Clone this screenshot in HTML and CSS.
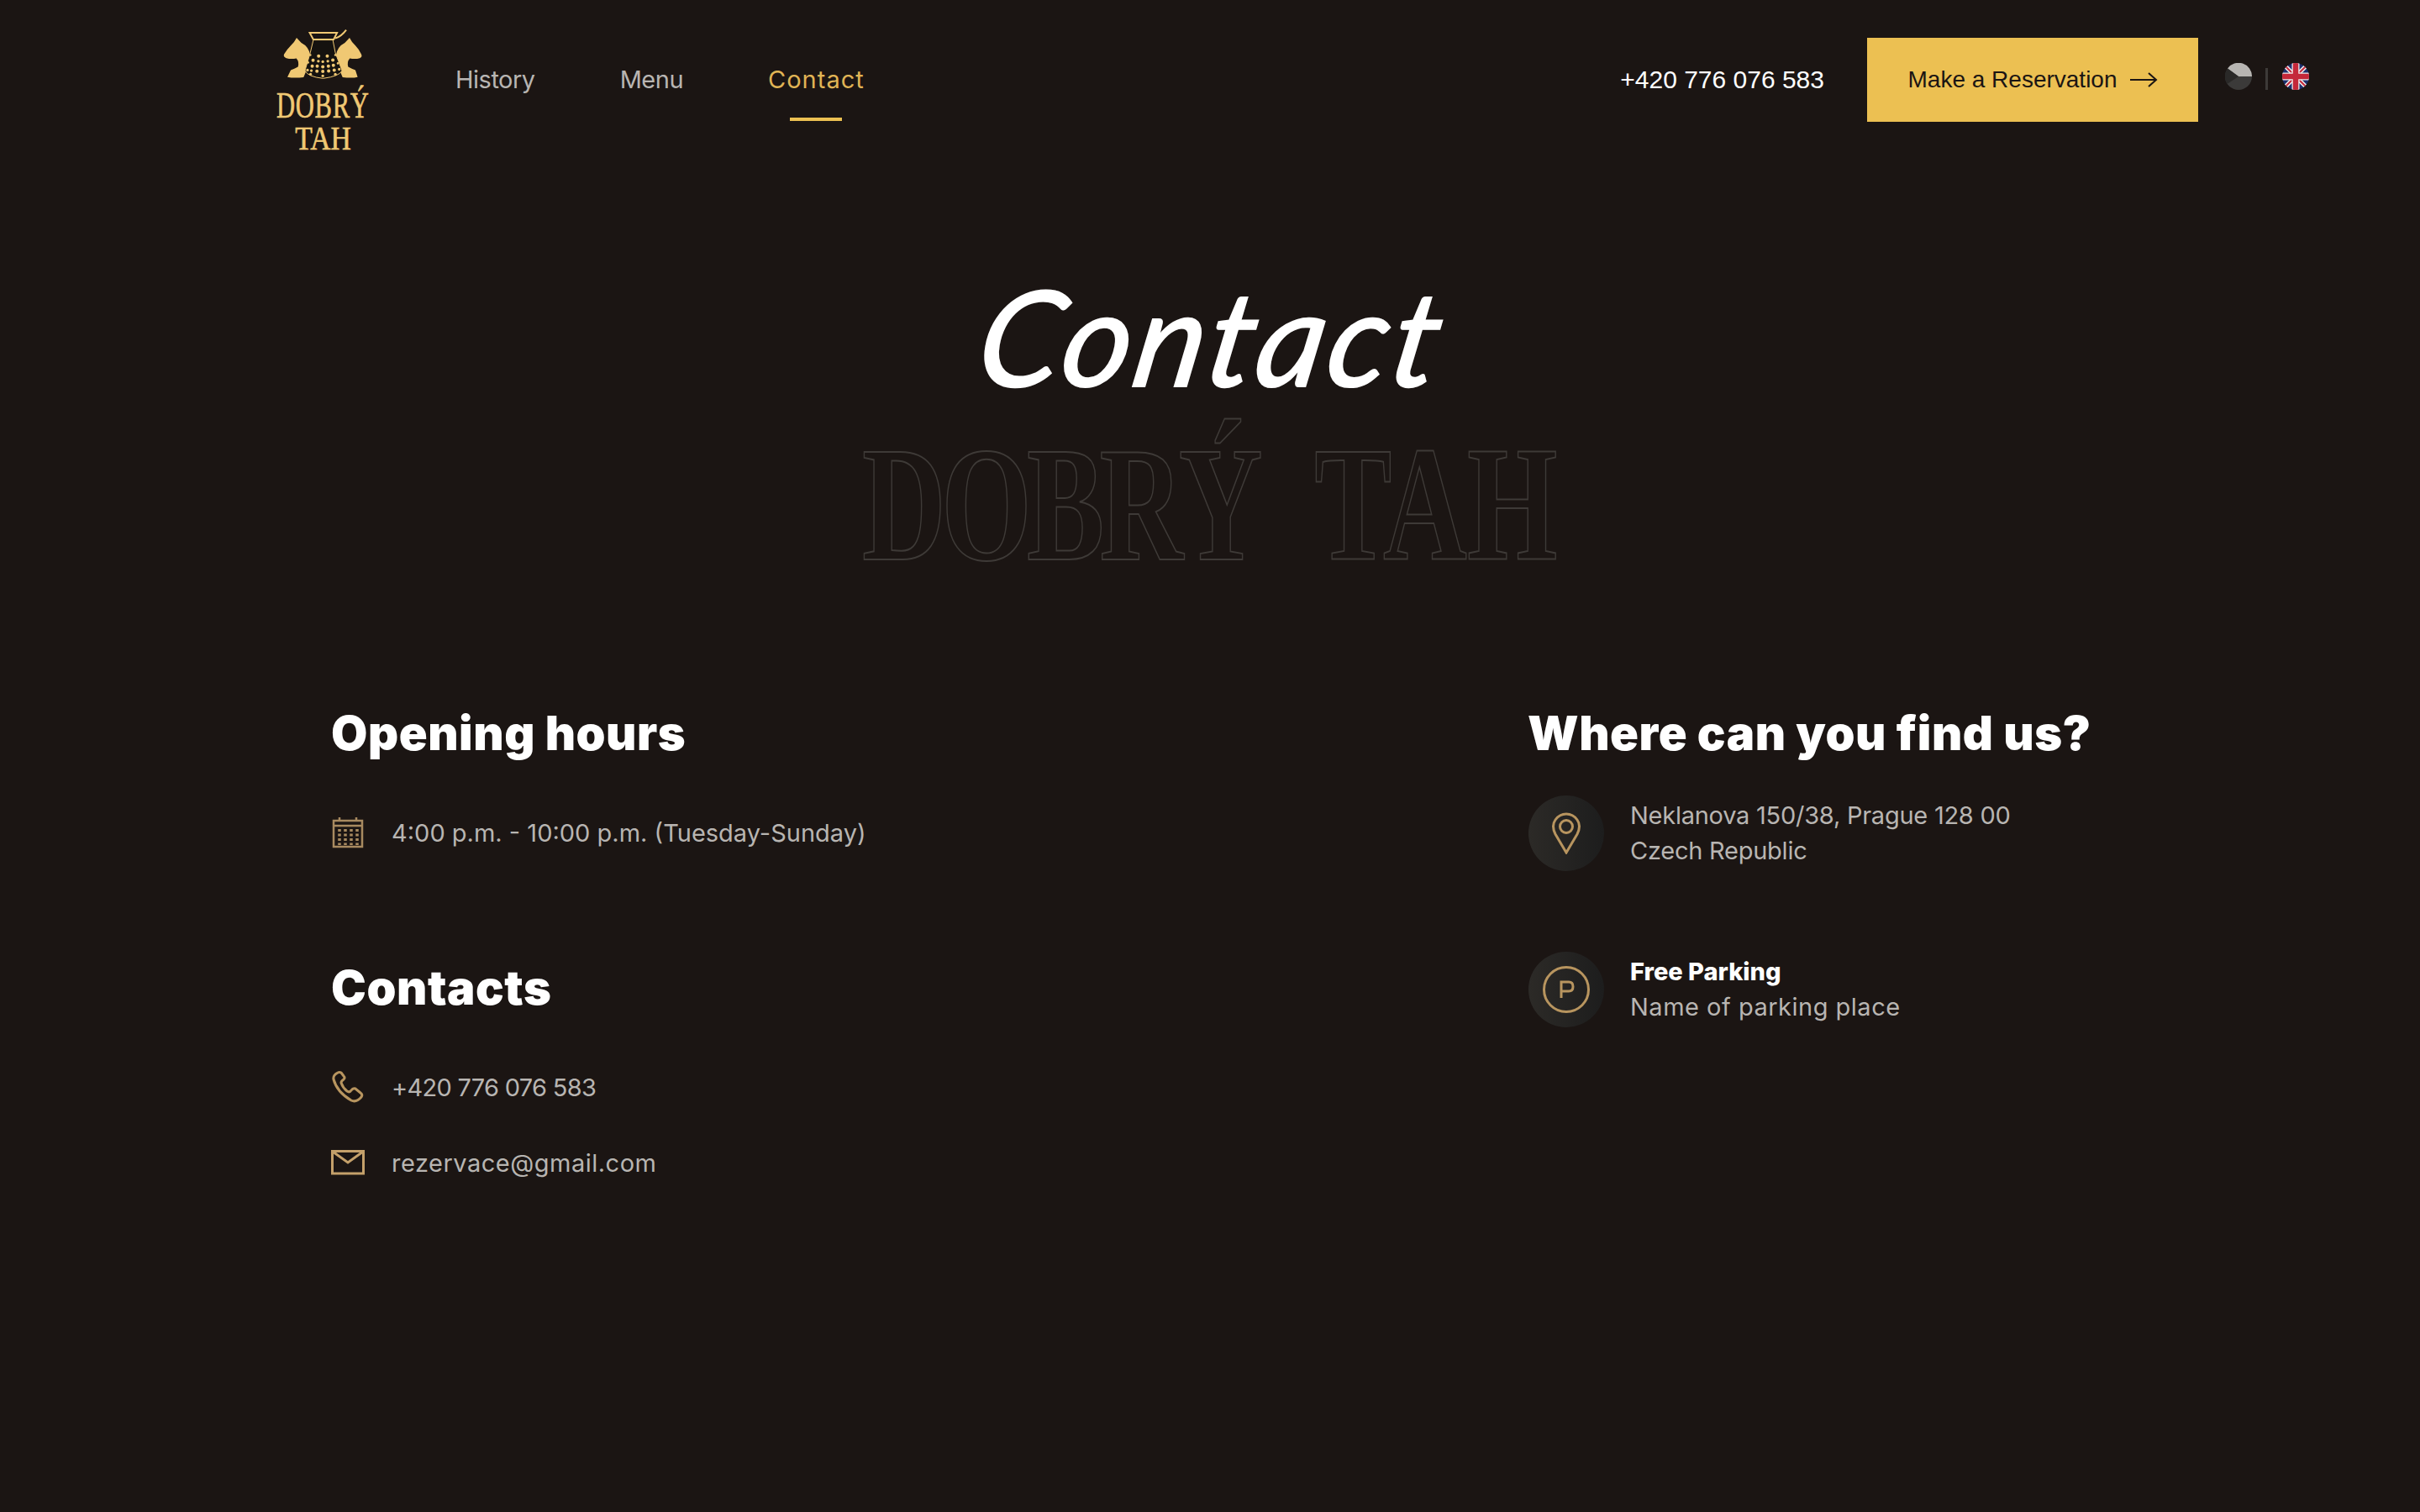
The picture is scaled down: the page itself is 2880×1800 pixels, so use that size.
FILE: index.html
```html
<!DOCTYPE html>
<html lang="en">
<head>
  <meta charset="UTF-8">
  <meta name="viewport" content="width=device-width, initial-scale=1.0">
  <title>Contact - Dobrý Tah</title>
  <link rel="stylesheet" href="styles.css">
</head>
<body>

  <header class="header">
    <a class="logo" href="#">
      <svg class="logo-mark" viewBox="75 30 290 190" width="97" height="63">
        <path class="gold" d="M125 66 L142 84 Q170 98 174 130 L165 172 L150 208 Q115 212 92 207 L104 182 Q120 176 130 170 Q135 152 124 140 Q105 144 88 139 Q76 134 80 125 Q92 106 104 94 Q116 84 125 66 Z"/>
        <path class="gold" d="M315 66 L298 84 Q270 98 266 130 L275 172 L290 208 Q325 212 344 207 L336 182 Q320 176 310 170 Q305 152 316 140 Q335 144 352 139 Q362 134 357 125 Q348 106 336 94 Q324 84 315 66 Z"/>
        <path class="pot" d="M185 74 H255 L264 120 L288 184 Q280 204 220 212 Q165 206 155 184 L174 120 Z"/>
        <path class="rim" d="M172 48 H270 L258 72 H185 Z M264 68 Q285 62 303 38"/>
        <g class="gold">
          <circle cx="204" cy="132" r="6"/><circle cx="235" cy="132" r="6"/><circle cx="174" cy="128" r="4"/><circle cx="264" cy="128" r="4"/>
          <circle cx="184" cy="147" r="6"/><circle cx="203" cy="150" r="5"/><circle cx="219" cy="152" r="5"/><circle cx="237" cy="150" r="5"/><circle cx="255" cy="146" r="6"/>
          <circle cx="166" cy="155" r="4"/><circle cx="181" cy="168" r="6"/><circle cx="199" cy="168" r="6"/><circle cx="219" cy="170" r="6"/><circle cx="239" cy="168" r="6"/><circle cx="257" cy="165" r="6"/><circle cx="273" cy="158" r="4"/>
          <circle cx="164" cy="182" r="5"/><circle cx="178" cy="184" r="5"/><circle cx="198" cy="186" r="6"/><circle cx="219" cy="187" r="6"/><circle cx="240" cy="185" r="6"/><circle cx="260" cy="182" r="6"/><circle cx="278" cy="179" r="5"/>
          <circle cx="175" cy="197" r="5"/><circle cx="219" cy="203" r="5"/><circle cx="264" cy="197" r="5"/>
        </g>
      </svg>
      <span class="logo-top">DOBRÝ</span>
      <span class="logo-bottom">TAH</span>
    </a>

    <nav class="nav">
      <a href="#">History</a>
      <a href="#">Menu</a>
      <a class="active" href="#">Contact</a>
    </nav>

    <div class="header-right">
      <a class="header-phone" href="#">+420 776 076 583</a>
      <a class="btn" href="#">
        Make a Reservation
        <svg width="34" height="20" viewBox="0 0 34 20"><path d="M1 10 H32 M23 2 L32 10 L23 18" fill="none" stroke="#1b1513" stroke-width="2"/></svg>
      </a>
      <div class="langs">
        <svg class="flag" viewBox="0 0 32 32"><circle cx="16" cy="16" r="16" fill="#3b3a39"/><path d="M3 6.5 A16 16 0 0 1 32 16 H16 Z" fill="#b7b5b2"/><path d="M3 6.5 L16 16 L2.5 25 A16 16 0 0 1 3 6.5 Z" fill="#2a2928"/></svg>
        <span class="lang-sep"></span>
        <svg class="flag" viewBox="0 0 32 32">
          <clipPath id="round"><circle cx="16" cy="16" r="16"/></clipPath>
          <g clip-path="url(#round)">
            <rect width="32" height="32" fill="#1c2f6e"/>
            <path d="M0 0 L32 32 M32 0 L0 32" stroke="#eee" stroke-width="5"/>
            <path d="M0 0 L32 32 M32 0 L0 32" stroke="#c4283a" stroke-width="2"/>
            <path d="M16 0 V32 M0 16 H32" stroke="#eee" stroke-width="9"/>
            <path d="M16 0 V32 M0 16 H32" stroke="#c4283a" stroke-width="6.5"/>
          </g>
        </svg>
      </div>
    </div>
  </header>

  <section class="hero">
    <h1 class="hero-title"><span>Contact</span></h1>
    <div class="hero-outline"><span><b>DOBRÝ</b> TAH</span></div>
  </section>

  <main class="columns">
    <div class="col-left">
      <h2>Opening hours</h2>
      <div class="rows">
        <div class="row">
          <svg class="icon" width="40" height="38" viewBox="0 0 40 38">
            <path d="M3 5 H37 V36 H3 Z M3 11 H37 M10 1 V5 M30 1 V5" fill="none" stroke="#a88a60" stroke-width="2.5"/>
            <path d="M10 15 V34 M17 15 V34 M24 15 V34 M31 15 V34" fill="none" stroke="#a88a60" stroke-width="3.5" stroke-dasharray="3 2.5"/>
          </svg>
          <span>4:00 p.m. - 10:00 p.m. (Tuesday-Sunday)</span>
        </div>
      </div>

      <h2 class="second">Contacts</h2>
      <div class="rows second-rows">
        <div class="row">
          <svg class="icon" width="40" height="40" viewBox="0 0 40 40">
            <path d="M8 3 Q2 6 3 11 Q7 26 24 36 Q30 39 36 32 Q38 29 35 27 L29 22 Q26 21 24 24 Q22 27 19 25 Q14 21 12 15 Q12 13 15 11 Q17 9 15 7 L12 3 Q10 2 8 3 Z" fill="none" stroke="#b8955f" stroke-width="3"/>
          </svg>
          <span class="tight">+420 776 076 583</span>
        </div>
        <div class="row">
          <svg class="icon" width="40" height="30" viewBox="0 0 40 30">
            <path d="M1.5 1.5 H38.5 V28 H1.5 Z M2 2 L20 15 L38 2" fill="none" stroke="#c4a06a" stroke-width="3"/>
          </svg>
          <span class="wide">rezervace@gmail.com</span>
        </div>
      </div>
    </div>

    <div class="col-right">
      <h2>Where can you find us?</h2>
      <div class="place">
        <div class="place-icon">
          <svg width="38" height="50" viewBox="0 0 38 50">
            <path d="M19 48 L6 26 Q1 16 6 9 Q11 2 19 2 Q27 2 32 9 Q37 16 32 26 Z" fill="none" stroke="#b8955f" stroke-width="3"/>
            <circle cx="19" cy="17" r="7.5" fill="none" stroke="#b8955f" stroke-width="3"/>
          </svg>
        </div>
        <p class="address">Neklanova 150/38, Prague 128 00<br>Czech Republic</p>
      </div>
      <div class="place">
        <div class="place-icon">
          <svg width="56" height="56" viewBox="0 0 56 56">
            <circle cx="28" cy="28" r="26.5" fill="none" stroke="#b8955f" stroke-width="3"/>
            <path d="M22 38 V19 H31 Q36 19 36 24.5 Q36 30 31 30 H22" fill="none" stroke="#b8955f" stroke-width="3"/>
          </svg>
        </div>
        <p><strong>Free Parking</strong><br><span class="wide">Name of parking place</span></p>
      </div>
    </div>
  </main>

</body>
</html>
```

FILE: styles.css
```css
* {
  box-sizing: border-box;
}

html, body {
  margin: 0;
  height: 1800px;
  overflow: hidden;
}

body {
  background: #1b1513;
  color: #b8b5b2;
  font-family: Inter, "Open Sans", sans-serif;
  font-size: 29px;
}

a {
  color: inherit;
  text-decoration: none;
}

/* header */
.header {
  display: flex;
  align-items: flex-start;
  height: 190px;
  padding: 33px 132px 0 328px;
}

.logo {
  display: flex;
  flex-direction: column;
  align-items: center;
  width: 112px;
  color: #f0c873;
  font-family: "Liberation Serif", serif;
  line-height: 1;
}

.logo-mark {
  flex: none;
  margin-bottom: 7px;
}

.gold {
  fill: #f0c873;
}

.pot {
  fill: #15120f;
  stroke: #f0c873;
  stroke-width: 3;
}

.rim {
  fill: none;
  stroke: #f0c873;
  stroke-width: 6;
}

.logo-top {
  font-size: 45px;
  height: 41px;
  letter-spacing: 1px;
  transform: scaleX(0.68);
  white-space: nowrap;
  -webkit-text-stroke: 0.7px #f0c873;
}

.logo-bottom {
  font-size: 41px;
  height: 36px;
  transform: scaleX(0.82);
  -webkit-text-stroke: 0.7px #f0c873;
}

.nav {
  display: flex;
  gap: 101px;
  margin: 44px 0 0 102px;
  font-size: 29px;
  line-height: 36px;
  letter-spacing: -0.5px;
}

.nav .active {
  position: relative;
  color: #e0b455;
  letter-spacing: 1px;
}

.nav .active::after {
  content: "";
  position: absolute;
  left: 26px;
  right: 27px;
  top: 63px;
  height: 4px;
  background: #ecc052;
}

.header-right {
  display: flex;
  align-items: center;
  margin: 12px 0 0 auto;
  color: #fff;
  font-family: "Liberation Sans", Arial, sans-serif;
  font-size: 30px;
}

.btn {
  display: flex;
  align-items: center;
  justify-content: center;
  gap: 14px;
  width: 394px;
  height: 100px;
  margin-left: 51px;
  background: #ecc052;
  color: #1b1513;
  font-size: 28px;
}

.langs {
  display: flex;
  align-items: center;
  gap: 16px;
  margin: -8px 0 0 32px;
}

.flag {
  width: 32px;
  height: 32px;
}

.lang-sep {
  width: 3px;
  height: 26px;
  margin: 6px 1px 0 0;
  background: #3d3a38;
}

/* hero */
.hero {
  display: flex;
  flex-direction: column;
  align-items: center;
}

.hero-title {
  margin: 114px 0 0 8px;
  color: #fff;
  font-family: Lato, sans-serif;
  font-size: 158px;
  font-style: italic;
  font-weight: 400;
  line-height: 190px;
  letter-spacing: 4px;
  -webkit-text-stroke: 2px #fff;
}

.hero-title span {
  display: inline-block;
  transform: skewX(-10deg);
}

.hero-outline {
  margin-top: -4px;
  color: transparent;
  font-family: "Liberation Serif", serif;
  font-size: 196px;
  font-weight: 700;
  line-height: 220px;
  white-space: nowrap;
  word-spacing: 50px;
  -webkit-text-stroke: 2px #3e3a37;
}

.hero-outline span {
  display: inline-block;
  transform: scaleX(0.705);
}

.hero-outline b {
  letter-spacing: -8px;
}

/* columns */
.columns {
  display: flex;
  padding: 129px 0 0 394px;
}

.col-left {
  width: 1424px;
}

h2 {
  margin: 0;
  color: #fff;
  font-size: 56px;
  font-weight: 900;
  line-height: 68px;
  letter-spacing: 0.55px;
}

h2.second {
  margin-top: 131px;
}

.rows {
  display: flex;
  flex-direction: column;
  gap: 50px;
  margin-top: 64px;
}

.second-rows {
  margin-top: 64px;
}

.row {
  display: flex;
  align-items: center;
  gap: 32px;
  height: 40px;
}

.icon {
  flex: none;
}

.tight {
  letter-spacing: -0.7px;
}

.wide {
  letter-spacing: 0.5px;
}

.place {
  display: flex;
  align-items: center;
  gap: 31px;
  margin: 0 0 96px 1px;
}

.col-right h2 {
  margin-bottom: 40px;
}

.place-icon {
  display: flex;
  align-items: center;
  justify-content: center;
  flex: none;
  width: 90px;
  height: 90px;
  border-radius: 50%;
  background: linear-gradient(90deg, #2c2a27, #1d1d1d);
}

.place p {
  margin: 0;
  line-height: 42px;
}

.address {
  letter-spacing: -0.25px;
}

.place strong {
  color: #fff;
  font-weight: 800;
  letter-spacing: 0;
}
```
